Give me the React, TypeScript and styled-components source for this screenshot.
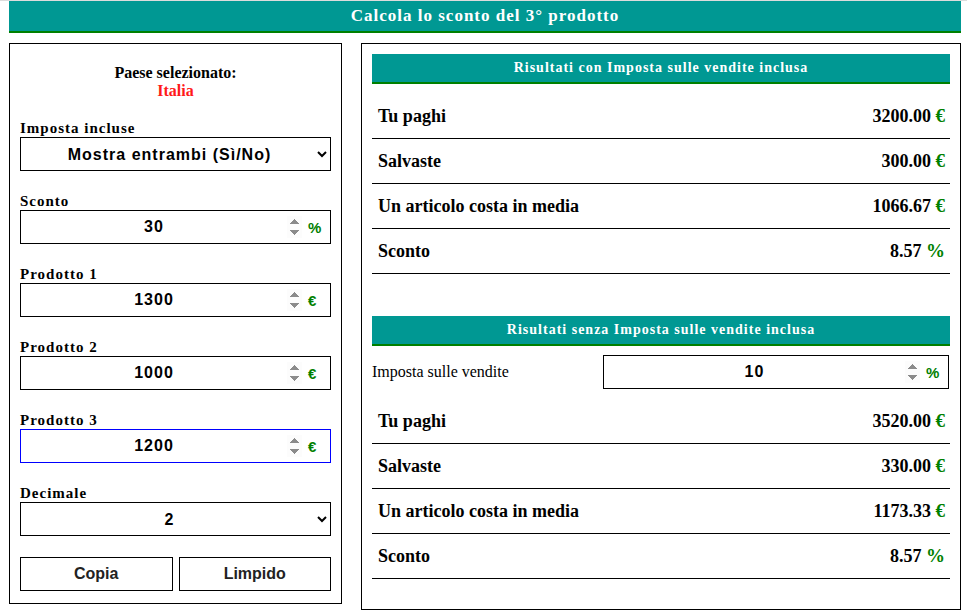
import React, { FC, useState } from 'react'
import styled, { createGlobalStyle } from 'styled-components'

const GlobalStyle = createGlobalStyle`
  body {
    margin: 0;
    background: #fff;
    font-family: "Liberation Serif", "Times New Roman", serif;
    color: #000;
  }
`

const Page = styled.div`
  border-top: 1px solid #dcdcdc;
  padding: 0 6px 0 9px;
`

const TitleBar = styled.h1`
  margin: 0 0 10px;
  height: 30px;
  background: #009893;
  border-bottom: 2px solid #008000;
  color: #fff;
  font-size: 17px;
  font-weight: bold;
  letter-spacing: 1px;
  line-height: 30px;
  text-align: center;
`

const Main = styled.div`
  display: grid;
  grid-template-columns: 333px 1fr;
  gap: 19px;
  align-items: start;
`

const Panel = styled.div<{ $pad: string }>`
  border: 1px solid #000;
  padding: ${(p) => p.$pad};
`

const Country = styled.div`
  text-align: center;
  font-size: 16px;
  font-weight: bold;
  line-height: 18px;
  margin-bottom: 19px;
`

const CountryName = styled.div`
  color: #ff1a1a;
`

const Field = styled.div`
  margin-bottom: 21px;
`

const Label = styled.label`
  display: block;
  font-size: 15px;
  font-weight: bold;
  letter-spacing: 1px;
  line-height: 18px;
`

const Select = styled.select`
  display: block;
  width: 100%;
  height: 34px;
  box-sizing: border-box;
  border: 1px solid #000;
  border-radius: 0;
  background: #fff;
  font-family: "Liberation Sans", Arial, sans-serif;
  font-size: 16px;
  font-weight: bold;
  letter-spacing: 1px;
  color: #000;
  text-align: center;
  text-align-last: center;
  outline: none;
`

const InputBox = styled.div<{ $active?: boolean }>`
  display: flex;
  align-items: center;
  height: 34px;
  box-sizing: border-box;
  border: 1px solid ${(p) => (p.$active ? '#0000ff' : '#000')};
  background: #fff;
`

const NumberInput = styled.input`
  flex: 1;
  min-width: 0;
  height: 100%;
  border: 0;
  padding: 0 2px 0 0;
  background: transparent;
  font-family: "Liberation Sans", Arial, sans-serif;
  font-size: 16px;
  font-weight: bold;
  letter-spacing: 1px;
  color: #000;
  text-align: center;
  outline: none;

  &::-webkit-inner-spin-button {
    opacity: 1;
    background: #efefef;
    height: 22px;
  }
`

const Unit = styled.span`
  flex: none;
  width: 26px;
  padding-left: 4px;
  box-sizing: border-box;
  color: #008000;
  font-family: "Liberation Sans", Arial, sans-serif;
  font-size: 15px;
  font-weight: bold;
`

const Buttons = styled.div`
  display: grid;
  grid-template-columns: 1fr 1fr;
  gap: 6px;
`

const Button = styled.button`
  height: 34px;
  border: 1px solid #000;
  background: #fff;
  color: #222;
  font-family: "Liberation Sans", Arial, sans-serif;
  font-size: 16px;
  font-weight: bold;
  cursor: pointer;
`

const SectionTitle = styled.div<{ $top?: number }>`
  margin-top: ${(p) => p.$top ?? 0}px;
  height: 28px;
  background: #009893;
  border-bottom: 2px solid #008000;
  color: #fff;
  font-size: 14px;
  font-weight: bold;
  letter-spacing: 1px;
  line-height: 28px;
  text-align: center;
`

const Rows = styled.div`
  margin-top: 10px;
`

const Row = styled.div`
  display: flex;
  justify-content: space-between;
  align-items: center;
  height: 45px;
  box-sizing: border-box;
  border-bottom: 1px solid #000;
  padding: 0 5px 0 6px;
  font-size: 18px;
  font-weight: bold;
`

const Sign = styled.span`
  color: #008000;
  font-size: 19px;
`

const TaxRow = styled.div`
  display: grid;
  grid-template-columns: 231px 1fr;
  align-items: center;
  margin-top: 9px;
  margin-right: 1px;
`

const TaxLabel = styled.span`
  font-size: 16px;
`

type NumFieldProps = {
  label: string
  value: string
  unit: string
  active?: boolean
  onChange: (v: string) => void
}

const NumField: FC<NumFieldProps> = ({ label, value, unit, active, onChange }) => (
  <Field>
    <Label>{label}</Label>
    <InputBox $active={active}>
      <NumberInput type="number" value={value} onChange={(e) => onChange(e.target.value)} />
      <Unit>{unit}</Unit>
    </InputBox>
  </Field>
)

type Result = { label: string; value: string; sign: string }

const ResultRows: FC<{ rows: Result[] }> = ({ rows }) => (
  <Rows>
    {rows.map((r) => (
      <Row key={r.label}>
        <span>{r.label}</span>
        <span>
          {r.value} <Sign>{r.sign}</Sign>
        </span>
      </Row>
    ))}
  </Rows>
)

const App: FC = () => {
  const [discount, setDiscount] = useState('30')
  const [p1, setP1] = useState('1300')
  const [p2, setP2] = useState('1000')
  const [p3, setP3] = useState('1200')
  const [tax, setTax] = useState('10')

  const withTax: Result[] = [
    { label: 'Tu paghi', value: '3200.00', sign: '€' },
    { label: 'Salvaste', value: '300.00', sign: '€' },
    { label: 'Un articolo costa in media', value: '1066.67', sign: '€' },
    { label: 'Sconto', value: '8.57', sign: '%' },
  ]
  const withoutTax: Result[] = [
    { label: 'Tu paghi', value: '3520.00', sign: '€' },
    { label: 'Salvaste', value: '330.00', sign: '€' },
    { label: 'Un articolo costa in media', value: '1173.33', sign: '€' },
    { label: 'Sconto', value: '8.57', sign: '%' },
  ]

  return (
    <Page>
      <GlobalStyle />
      <TitleBar>Calcola lo sconto del 3° prodotto</TitleBar>
      <Main>
        <Panel $pad="20px 10px 12px">
          <Country>
            <div>Paese selezionato:</div>
            <CountryName>Italia</CountryName>
          </Country>
          <Field>
            <Label>Imposta incluse</Label>
            <Select defaultValue="both">
              <option value="both">Mostra entrambi (Sì/No)</option>
              <option value="yes">Sì</option>
              <option value="no">No</option>
            </Select>
          </Field>
          <NumField label="Sconto" value={discount} unit="%" onChange={setDiscount} />
          <NumField label="Prodotto 1" value={p1} unit="€" onChange={setP1} />
          <NumField label="Prodotto 2" value={p2} unit="€" onChange={setP2} />
          <NumField label="Prodotto 3" value={p3} unit="€" active onChange={setP3} />
          <Field>
            <Label>Decimale</Label>
            <Select defaultValue="2">
              <option value="0">0</option>
              <option value="1">1</option>
              <option value="2">2</option>
              <option value="3">3</option>
            </Select>
          </Field>
          <Buttons>
            <Button>Copia</Button>
            <Button>Limpido</Button>
          </Buttons>
        </Panel>
        <Panel $pad="10px 10px 30px">
          <SectionTitle>Risultati con Imposta sulle vendite inclusa</SectionTitle>
          <ResultRows rows={withTax} />
          <SectionTitle $top={42}>Risultati senza Imposta sulle vendite inclusa</SectionTitle>
          <TaxRow>
            <TaxLabel>Imposta sulle vendite</TaxLabel>
            <InputBox>
              <NumberInput type="number" value={tax} onChange={(e) => setTax(e.target.value)} />
              <Unit>%</Unit>
            </InputBox>
          </TaxRow>
          <ResultRows rows={withoutTax} />
        </Panel>
      </Main>
    </Page>
  )
}

export default App
